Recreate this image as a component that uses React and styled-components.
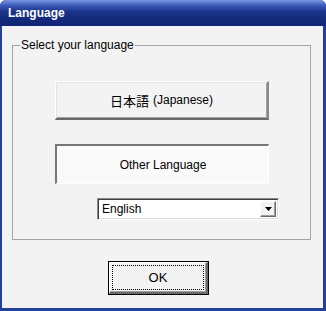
import React from "react";
import styled, { createGlobalStyle } from "styled-components";

const GlobalStyle = createGlobalStyle`
  html, body {
    margin: 0;
    padding: 0;
    background: #ffffff;
  }
  body {
    font-family: "Liberation Sans", Arial, sans-serif;
  }
`;

// window frame
const Window = styled.div`
  width: 326px;
  height: 311px;
  box-sizing: border-box;
  display: flex;
  flex-direction: column;
  background: #23419a;
  border-radius: 6px 6px 0 0;
  overflow: hidden;
`;

const TitleBar = styled.div`
  height: 26px;
  flex: none;
  display: flex;
  align-items: center;
  padding-left: 8px;
  padding-bottom: 1px;
  box-sizing: border-box;
  background: linear-gradient(
    to bottom,
    #7d98e2 0%,
    #3c5cbb 20%,
    #1b3488 45%,
    #132a7c 75%,
    #102676 100%
  );
  color: #ffffff;
  font-size: 12px;
  font-weight: bold;
`;

const Body = styled.div`
  flex: 1;
  margin: 0 3px 3px 2px;
  background: #f3f3f3;
  padding-top: 19px;
  padding-left: 10px;
  box-sizing: border-box;
`;

const GroupBox = styled.div`
  position: relative;
  width: 299px;
  height: 195px;
  box-sizing: border-box;
  border: 1px solid #a5a5a5;
  padding: 35px 0 0 42px;
  display: flex;
  flex-direction: column;
  align-items: flex-start;
`;

const GroupLabel = styled.span`
  position: absolute;
  top: -8px;
  left: 7px;
  padding: 0 1px;
  background: #f3f3f3;
  color: #000000;
  font-size: 12px;
  line-height: 14px;
`;

const LangButton = styled.div`
  width: 214px;
  height: ${(p) => (p.$pressed ? 40 : 39)}px;
  margin-top: ${(p) => p.$gap || 0}px;
  box-sizing: border-box;
  display: flex;
  align-items: center;
  justify-content: center;
  font-size: 12px;
  color: #000000;
  ${(p) =>
    p.$pressed
      ? `
    border-top: 2px solid #777777;
    border-left: 2px solid #777777;
    border-bottom: 1px solid #ffffff;
    border-right: 1px solid #ffffff;
    padding: 1px 0 0 1px;
    background-color: #f5f5f5;
    background-image:
      linear-gradient(45deg, #ffffff 25%, transparent 25%, transparent 75%, #ffffff 75%),
      linear-gradient(45deg, #ffffff 25%, transparent 25%, transparent 75%, #ffffff 75%);
    background-size: 2px 2px;
    background-position: 0 0, 1px 1px;
  `
      : `
    border-top: 1px solid #ffffff;
    border-left: 1px solid #ffffff;
    border-bottom: 2px solid #6a6a6a;
    border-right: 2px solid #8a8a8a;
    box-shadow: inset 1px 1px 0 #e3e3e3, inset -1px -1px 0 #a0a0a0;
    background: #f3f3f3;
  `}
`;

const Jp = styled.span`
  font-family: "Noto Sans CJK JP", "Liberation Sans", sans-serif;
  font-size: 13px;
  margin-right: 4px;
`;

const Select = styled.div`
  margin-top: 14px;
  margin-left: 42px;
  width: 182px;
  height: 22px;
  box-sizing: border-box;
  display: flex;
  align-items: stretch;
  background: #ffffff;
  border-top: 1px solid #8a8a8a;
  border-left: 1px solid #8a8a8a;
  border-bottom: 1px solid #ffffff;
  border-right: 1px solid #ffffff;
  box-shadow: inset 1px 1px 0 #3f3f3f, inset -1px -1px 0 #dcdcdc;
  padding: 2px;
`;

const SelectText = styled.div`
  flex: 1;
  display: flex;
  align-items: center;
  padding-left: 2px;
  font-size: 12px;
  color: #000000;
`;

const ArrowButton = styled.div`
  width: 16px;
  box-sizing: border-box;
  display: flex;
  align-items: center;
  justify-content: center;
  background: #f3f3f3;
  border-top: 1px solid #ffffff;
  border-left: 1px solid #ffffff;
  border-bottom: 1px solid #6a6a6a;
  border-right: 1px solid #6a6a6a;
  box-shadow: inset -1px -1px 0 #a0a0a0;
`;

const Footer = styled.div`
  padding-top: 21px;
  padding-left: 96px;
`;

const OkButton = styled.div`
  width: 101px;
  height: 34px;
  box-sizing: border-box;
  border: 1px solid #000000;
  background: #f3f3f3;
  padding: 0;
  display: flex;
`;

const OkInner = styled.div`
  flex: 1;
  border-top: 1px solid #ffffff;
  border-left: 1px solid #ffffff;
  border-bottom: 2px solid #6a6a6a;
  border-right: 2px solid #6a6a6a;
  box-shadow: inset -1px -1px 0 #a0a0a0;
  padding: 2px;
  display: flex;
`;

const FocusRing = styled.div`
  flex: 1;
  border: 1px dotted #000000;
  display: flex;
  align-items: center;
  justify-content: center;
  font-size: 13px;
  color: #000000;
`;

export default function App() {
  return (
    <>
      <GlobalStyle />
      <Window>
        <TitleBar>Language</TitleBar>
        <Body>
          <GroupBox>
            <GroupLabel>Select your language</GroupLabel>
            <LangButton>
              <Jp>日本語</Jp>(Japanese)
            </LangButton>
            <LangButton $pressed $gap={24}>
              Other Language
            </LangButton>
            <Select>
              <SelectText>English</SelectText>
              <ArrowButton>
                <svg width="7" height="4" viewBox="0 0 7 4">
                  <path d="M0 0h7L3.5 4z" fill="#000" />
                </svg>
              </ArrowButton>
            </Select>
          </GroupBox>
          <Footer>
            <OkButton>
              <OkInner>
                <FocusRing>OK</FocusRing>
              </OkInner>
            </OkButton>
          </Footer>
        </Body>
      </Window>
    </>
  );
}
